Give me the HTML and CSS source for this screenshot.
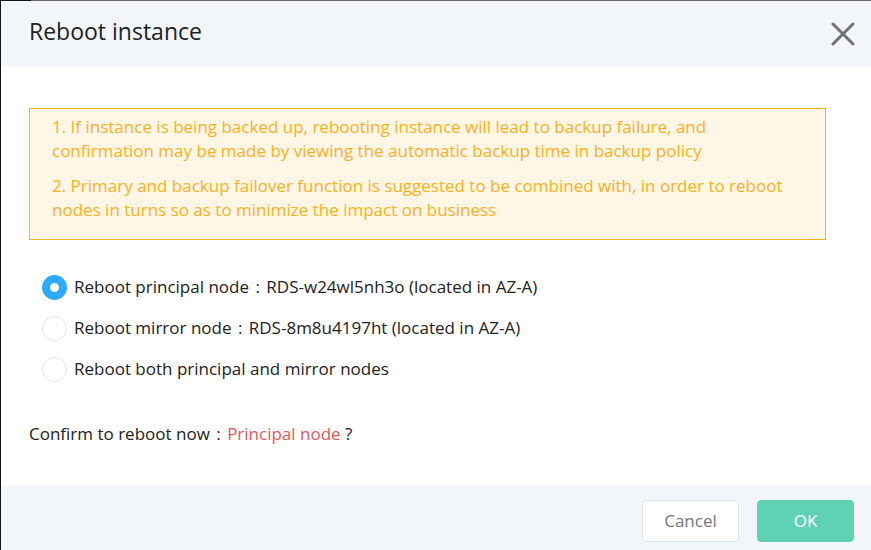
FILE: index.html
```html
<!DOCTYPE html>
<html lang="en">
<head>
<meta charset="utf-8">
<meta name="viewport" content="width=device-width, initial-scale=1">
<title>Reboot instance</title>
<link rel="stylesheet" href="styles.css">
</head>
<body>
<form class="dialog">
  <header class="dialog-header">
    <h1 class="dialog-title">Reboot instance</h1>
    <button class="close" type="button" aria-label="Close">
      <svg width="24" height="24" viewBox="0 0 24 24" fill="none" stroke="#707070" stroke-width="3" stroke-linecap="round"><path d="M2 2 22 22M22 2 2 22"/></svg>
    </button>
  </header>
  <main class="dialog-body">
    <div class="notice">
      <p>1. If instance is being backed up, rebooting instance will lead to backup failure, and confirmation may be made by viewing the automatic backup time in backup policy</p>
      <p>2. Primary and backup failover function is suggested to be combined with, in order to reboot nodes in turns so as to minimize the impact on business</p>
    </div>
    <div class="options" role="radiogroup" aria-label="Reboot instance">
      <label class="option"><input type="radio" name="node" value="principal" checked><span>Reboot principal node <span class="colon">:</span> RDS-w24wl5nh3o (located in AZ-A)</span></label>
      <label class="option"><input type="radio" name="node" value="mirror"><span>Reboot mirror node <span class="colon">:</span> RDS-8m8u4197ht (located in AZ-A)</span></label>
      <label class="option"><input type="radio" name="node" value="both"><span>Reboot both principal and mirror nodes</span></label>
    </div>
    <p class="confirm">Confirm to reboot now <span class="colon">:</span> <span class="target">Principal node</span> ?</p>
  </main>
  <footer class="dialog-footer">
    <button class="btn" type="button">Cancel</button>
    <button class="btn btn-primary" type="submit">OK</button>
  </footer>
</form>
</body>
</html>
```
FILE: styles.css
```css
* {
  box-sizing: border-box;
}

body {
  margin: 0;
  background: #fff;
  color: #222;
  font: 17px/24px "Open Sans", "Noto Sans", sans-serif;
}

h1,
p {
  margin: 0;
}

button,
input {
  margin: 0;
  font: inherit;
}

.dialog {
  display: flex;
  flex-direction: column;
  min-height: 100vh;
  border-left: 1px solid #15121c;
}

.dialog-header {
  display: flex;
  align-items: center;
  justify-content: space-between;
  padding: 17px 16px 17px 28px;
  background:
    linear-gradient(#15121c, #15121c) no-repeat 0 0 / 30px 1px,
    linear-gradient(#6c6b73, #6c6b73) no-repeat 0 0 / 100% 1px,
    #f2f6fb;
}

.dialog-title {
  padding-bottom: 4px;
  font-size: 23px;
  font-weight: 400;
  line-height: 29px;
}

.close {
  padding: 0;
  border: 0;
  background: none;
}

.close svg {
  display: block;
}

.dialog-body {
  flex: 1;
  padding: 41px 45px 39px 28px;
}

.notice {
  display: grid;
  gap: 11px;
  padding: 6px 22px 17px;
  border: 1px solid #f9b41c;
  background: #fff6e6;
  color: #fbb01b;
}

.options {
  display: grid;
  gap: 16px;
  padding: 35px 13px 0;
}

.option {
  display: flex;
  align-items: flex-start;
  gap: 7px;
}

.option input {
  flex: none;
  width: 25px;
  height: 25px;
  appearance: none;
  border: 1px solid #dfe5ec;
  border-radius: 50%;
  background: #fff;
}

.option input:checked {
  border: 8px solid #2baaff;
}

.colon {
  margin: 0 2px;
}

.confirm {
  padding-top: 40px;
}

.target {
  color: #e4575c;
}

.dialog-footer {
  display: flex;
  justify-content: flex-end;
  gap: 18px;
  padding: 15px 17px 8px;
  background: #f2f6fb;
}

.btn {
  width: 97px;
  height: 42px;
  border: 1px solid #dae2ea;
  border-radius: 4px;
  background: #fff;
  color: #777;
}

.btn-primary {
  border-color: #5fd1b5;
  background: #5fd1b5;
  color: #fff;
}
```
